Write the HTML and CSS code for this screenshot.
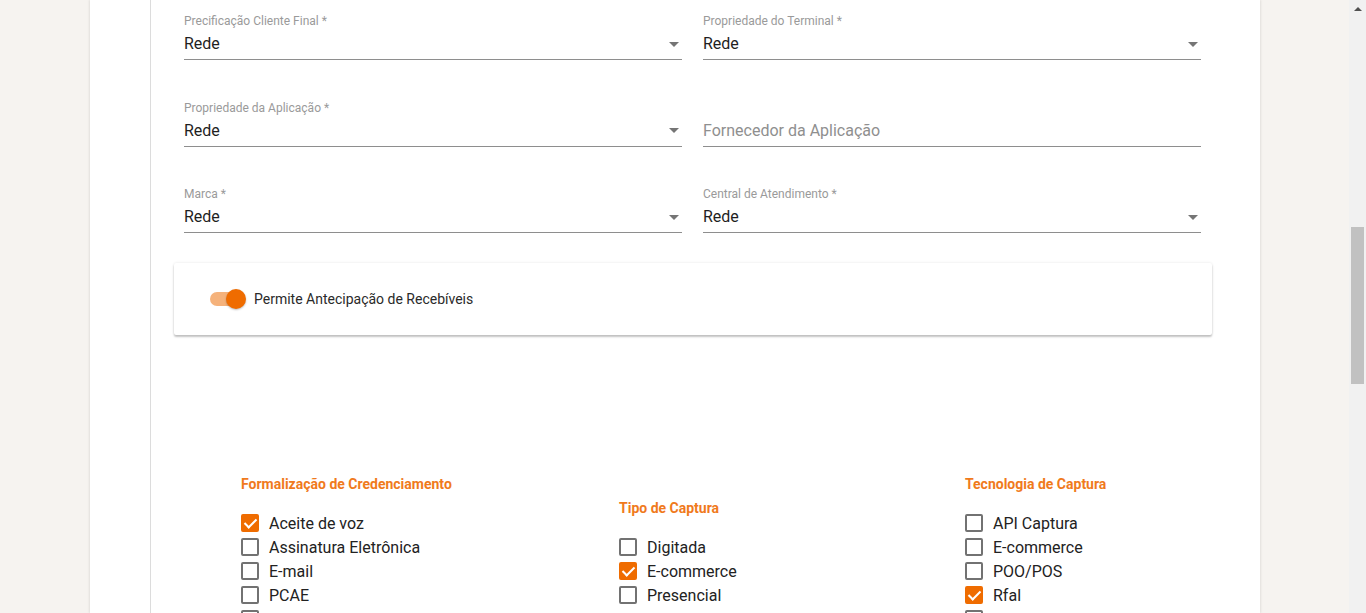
FILE: index.html
```html
<!DOCTYPE html>
<html lang="pt-BR">
<head>
<meta charset="utf-8">
<title>Formulário</title>
<link rel="stylesheet" href="styles.css">
</head>
<body>
<div class="viewport">
  <div class="page">
    <div class="panel">
      <div class="content">
        <div class="fields">
          <div class="field">
            <div class="label">Precificação Cliente Final *</div>
            <div class="value"><span>Rede</span><span class="caret"></span></div>
          </div>
          <div class="field">
            <div class="label">Propriedade do Terminal *</div>
            <div class="value"><span>Rede</span><span class="caret"></span></div>
          </div>
          <div class="field">
            <div class="label">Propriedade da Aplicação *</div>
            <div class="value"><span>Rede</span><span class="caret"></span></div>
          </div>
          <div class="field">
            <div class="label"></div>
            <div class="value"><span class="placeholder">Fornecedor da Aplicação</span></div>
          </div>
          <div class="field">
            <div class="label">Marca *</div>
            <div class="value"><span>Rede</span><span class="caret"></span></div>
          </div>
          <div class="field">
            <div class="label">Central de Atendimento *</div>
            <div class="value"><span>Rede</span><span class="caret"></span></div>
          </div>
        </div>

        <div class="card">
          <div class="switch"><span class="track"></span><span class="thumb"></span></div>
          <span class="switch-label">Permite Antecipação de Recebíveis</span>
        </div>

        <div class="groups">
          <div class="group">
            <div class="group-title">Formalização de Credenciamento</div>
            <ul class="checks">
              <li><span class="box checked"></span>Aceite de voz</li>
              <li><span class="box"></span>Assinatura Eletrônica</li>
              <li><span class="box"></span>E-mail</li>
              <li><span class="box"></span>PCAE</li>
              <li><span class="box"></span></li>
            </ul>
          </div>
          <div class="group">
            <div class="group-title">Tipo de Captura</div>
            <ul class="checks">
              <li><span class="box"></span>Digitada</li>
              <li><span class="box checked"></span>E-commerce</li>
              <li><span class="box"></span>Presencial</li>
            </ul>
          </div>
          <div class="group">
            <div class="group-title">Tecnologia de Captura</div>
            <ul class="checks">
              <li><span class="box"></span>API Captura</li>
              <li><span class="box"></span>E-commerce</li>
              <li><span class="box"></span>POO/POS</li>
              <li><span class="box checked"></span>Rfal</li>
              <li><span class="box"></span></li>
            </ul>
          </div>
        </div>
      </div>
    </div>
  </div>
  <div class="scrollbar">
    <div class="arrow"></div>
    <div class="thumb-bar"></div>
  </div>
</div>
</body>
</html>
```

FILE: styles.css
```css
* { box-sizing: border-box; }
html, body {
  margin: 0;
  padding: 0;
  height: 613px;
  overflow: hidden;
  font-family: Roboto, "Liberation Sans", Arial, sans-serif;
  color: #212121;
}
.viewport {
  display: flex;
  height: 613px;
}
.page {
  flex: 1;
  background: #f6f3f0;
  padding-left: 90px;
  overflow: hidden;
}
.panel {
  width: 1170px;
  height: 613px;
  background: #fff;
  padding-left: 60px;
  box-shadow: -1px 0 2px rgba(0,0,0,0.08), 1px 0 2px rgba(0,0,0,0.08);
}
.content {
  height: 100%;
  border-left: 1px solid #dcdcdc;
  padding-left: 23px;
}
.fields {
  display: grid;
  grid-template-columns: 498px 498px;
  column-gap: 21px;
  row-gap: 39.5px;
  padding: 13px 0 0 10px;
}
.field {
  height: 47px;
  border-bottom: 1px solid #8e8e8e;
}
.label {
  font-size: 12px;
  line-height: 14px;
  height: 14px;
  margin-top: 1px;
  color: #9a9a9a;
}
.value {
  display: flex;
  align-items: center;
  justify-content: space-between;
  margin-top: 4px;
  height: 24px;
  font-size: 16px;
  line-height: 24px;
  color: #1f1f1f;
}
.placeholder { color: #8f8f8f; }
.caret {
  width: 0;
  height: 0;
  margin-right: 3px;
  border-left: 5px solid transparent;
  border-right: 5px solid transparent;
  border-top: 5px solid #757575;
}
.card {
  margin-top: 30px;
  width: 1038px;
  height: 72px;
  display: flex;
  align-items: center;
  padding-left: 36px;
  background: #fff;
  border-radius: 2px;
  box-shadow: 0 2px 2px rgba(0,0,0,0.22), 0 0 3px rgba(0,0,0,0.1);
}
.switch {
  position: relative;
  width: 36px;
  height: 20px;
  margin-right: 8px;
  display: flex;
  align-items: center;
}
.track {
  display: block;
  width: 34px;
  height: 14px;
  border-radius: 7px;
  background: #f5b27b;
}
.thumb {
  position: absolute;
  right: 0;
  top: 0;
  width: 20px;
  height: 20px;
  border-radius: 50%;
  background: #ef6c00;
  box-shadow: 0 1px 2px rgba(0,0,0,0.25);
}
.switch-label {
  font-size: 14px;
  color: #2a2a2a;
}
.groups {
  display: grid;
  grid-template-columns: 378px 346px auto;
  align-items: center;
  margin-top: 141px;
  padding-left: 67px;
}
.group-title {
  font-size: 14px;
  font-weight: 700;
  line-height: 16px;
  color: #f07a1c;
  margin-bottom: 19px;
}
.checks {
  list-style: none;
  margin: 0;
  padding: 0;
}
.checks li {
  display: flex;
  align-items: center;
  height: 24px;
  font-size: 16px;
  color: #222;
}
.box {
  width: 18px;
  height: 18px;
  border: 2px solid #727272;
  border-radius: 2px;
  margin-right: 10px;
  flex: none;
  display: flex;
  align-items: center;
  justify-content: center;
}
.box.checked {
  border-color: #ef6c00;
  background: #ef6c00;
}
.box.checked::after {
  content: "";
  width: 5px;
  height: 10px;
  border-right: 2px solid #fff;
  border-bottom: 2px solid #fff;
  transform: translate(0, -1px) rotate(45deg);
}
.scrollbar {
  width: 17px;
  height: 613px;
  background: #f1f1f1;
  display: flex;
  flex-direction: column;
  align-items: center;
}
.arrow {
  margin-top: 7px;
  width: 0;
  height: 0;
  border-left: 4px solid transparent;
  border-right: 4px solid transparent;
  border-bottom: 4px solid #505050;
}
.thumb-bar {
  margin-top: 216px;
  width: 13px;
  height: 157px;
  background: #c1c1c1;
}
```
